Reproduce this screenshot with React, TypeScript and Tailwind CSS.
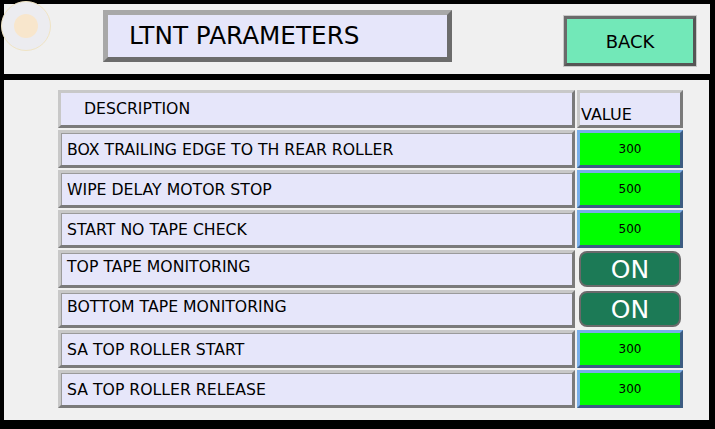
import React from "react";

type Row = { label: string; value: string; kind: "num" | "on"; top?: boolean };

const rows: Row[] = [
  { label: "BOX TRAILING EDGE TO TH REAR ROLLER", value: "300", kind: "num" },
  { label: "WIPE DELAY MOTOR STOP", value: "500", kind: "num" },
  { label: "START NO TAPE CHECK", value: "500", kind: "num" },
  { label: "TOP TAPE MONITORING", value: "ON", kind: "on", top: true },
  { label: "BOTTOM TAPE MONITORING", value: "ON", kind: "on", top: true },
  { label: "SA TOP ROLLER START", value: "300", kind: "num" },
  { label: "SA TOP ROLLER RELEASE", value: "300", kind: "num" },
];

const font = { fontFamily: '"DejaVu Sans", Verdana, sans-serif' };

function DescCell({ label, top }: { label: string; top?: boolean }) {
  return (
    <div
      className={`w-[517px] h-full bg-[#e6e6fa] border-[3px] border-t-[#c8c8c8] border-l-[#c8c8c8] border-b-[#7a7a7a] border-r-[#7a7a7a] shadow-[inset_1px_1px_0_#9a9a9a] flex pl-[6px] text-[15.7px] text-black ${
        top ? "items-start pt-[2px]" : "items-center pt-[1px]"
      }`}
    >
      {label}
    </div>
  );
}

function ValueCell({ row }: { row: Row }) {
  if (row.kind === "on") {
    return (
      <div className="w-[106px] h-full flex items-center justify-center">
        <div className="w-[102px] h-[36px] rounded-[8px] bg-[#1c7a56] border-[2px] border-[#6a6a6a] flex items-center justify-center text-white text-[25px] pt-[1px]">
          {row.value}
        </div>
      </div>
    );
  }
  return (
    <div className="w-[106px] h-full bg-[#00ff00] border-[3px] border-t-[#78aee8] border-l-[#78aee8] border-b-[#3c5c82] border-r-[#3c5c82] flex items-center justify-center text-[12px] text-black">
      {row.value}
    </div>
  );
}

export default function App() {
  return (
    <div className="w-[715px] h-[429px] bg-black p-[4px] pt-[4px] flex flex-col gap-[6px]" style={font}>
      <div className="relative h-[70px] w-[706px] bg-[#f0f0f0] flex items-start">
        <div className="absolute left-[-3px] top-[-3px] w-[50px] h-[50px] rounded-full border border-[#f0e4c4] bg-[#ececf0] flex items-center justify-center">
          <div className="w-[24px] h-[24px] rounded-full bg-[#f8e6cc]" />
        </div>
        <div className="ml-[99px] mt-[6px] w-[349px] h-[52px] bg-[#e6e6fa] border-[5px] border-t-[#a8a8a8] border-l-[#a8a8a8] border-b-[#6c6c6c] border-r-[#6c6c6c] flex items-center pl-[21px] text-[24.7px] text-black">
          LTNT PARAMETERS
        </div>
        <div className="ml-[111px] mt-[11px] w-[134px] h-[52px] border border-[#c8c8c8] flex">
          <div className="flex-1 bg-[#72e8b8] border-[3px] border-t-[#6a6a6a] border-l-[#6a6a6a] border-b-[#555555] border-r-[#555555] flex items-center justify-center text-[18px] text-black">
            BACK
          </div>
        </div>
      </div>
      <div className="h-[340px] w-[705px] bg-[#f0f0f0] pl-[54px] pt-[10px] flex flex-col gap-[2px]">
        <div className="flex gap-[2px] h-[38px]">
          <div className="w-[517px] h-full bg-[#e6e6fa] border-[3px] border-t-[#c8c8c8] border-l-[#c8c8c8] border-b-[#7a7a7a] border-r-[#7a7a7a] flex items-start pt-[4px] pl-[23px] text-[15.7px] text-black">
            DESCRIPTION
          </div>
          <div className="w-[106px] h-full bg-[#e6e6fa] border-[3px] border-t-[#c8c8c8] border-l-[#c8c8c8] border-b-[#7a7a7a] border-r-[#7a7a7a] flex items-start pt-[10px] pl-[1px] text-[16px] text-black">
            VALUE
          </div>
        </div>
        {rows.map((r, i) => (
          <div key={i} className="flex gap-[2px] h-[38px]">
            <DescCell label={r.label} top={r.top} />
            <ValueCell row={r} />
          </div>
        ))}
      </div>
    </div>
  );
}
